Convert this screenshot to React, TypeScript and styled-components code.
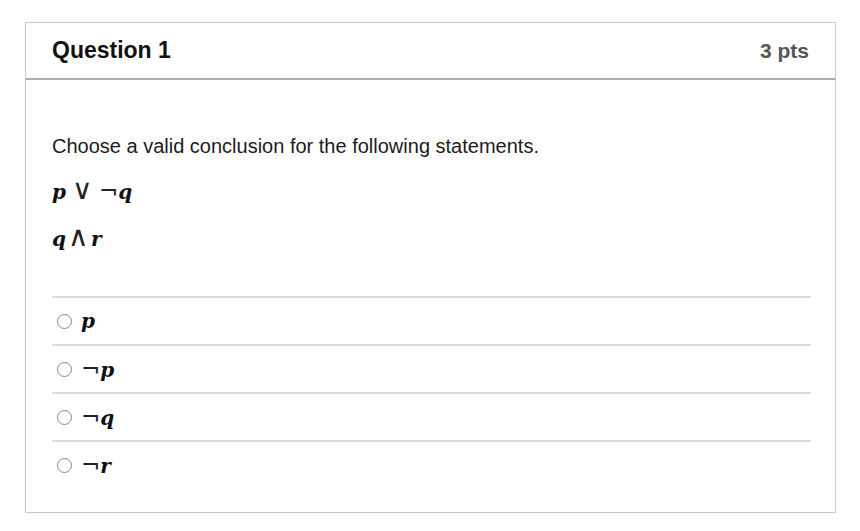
import React from "react";
import styled, { createGlobalStyle } from "styled-components";

const GlobalStyle = createGlobalStyle`
  html, body {
    margin: 0;
    padding: 0;
    background: #ffffff;
  }
  body {
    font-family: "Liberation Sans", Arial, sans-serif;
    color: #222;
  }
`;

const Page = styled.div`
  padding: 22px 0 0 25px;
  width: 860px;
  height: 531px;
  box-sizing: border-box;
`;

const Card = styled.div`
  width: 811px;
  height: 491px;
  box-sizing: border-box;
  border: 1px solid #c8c8c8;
  display: flex;
  flex-direction: column;
`;

const Header = styled.div`
  height: 57px;
  box-sizing: border-box;
  border-bottom: 2px solid #adadad;
  display: flex;
  align-items: center;
  justify-content: space-between;
  padding: 0 26px 0 26px;
`;

const Title = styled.div`
  font-weight: 700;
  font-size: 23px;
  color: #111;
`;

const Points = styled.div`
  font-weight: 700;
  font-size: 21px;
  color: #555;
`;

const Body = styled.div`
  padding: 51px 24px 0 26px;
  display: flex;
  flex-direction: column;
`;

const Prompt = styled.div`
  font-size: 20px;
  line-height: 30px;
  color: #1c1c1c;
`;

const MathLine = styled.div<{ $top: number }>`
  height: 30px;
  margin-top: ${(p) => p.$top}px;
  display: flex;
  align-items: center;
`;

const Expr = styled.span`
  display: inline-flex;
  align-items: baseline;
`;

const Var = styled.span`
  font-family: "DejaVu Serif", "Liberation Serif", serif;
  font-style: italic;
  font-weight: 700;
  font-size: 20px;
  line-height: 24px;
  color: #111;
`;

const Op = styled.span<{ $gap?: number; $size?: number; $weight?: number }>`
  font-family: "DejaVu Sans", sans-serif;
  font-weight: ${(p) => p.$weight ?? 200};
  font-size: ${(p) => p.$size ?? 28}px;
  line-height: 24px;
  color: #222;
  margin: 0 ${(p) => p.$gap ?? 0}px;
`;

const Answers = styled.div`
  margin-top: 43px;
  display: flex;
  flex-direction: column;
`;

const Answer = styled.label`
  height: 48px;
  box-sizing: border-box;
  border-top: 2px solid #dcdcdc;
  display: flex;
  align-items: center;
  padding-left: 5px;
  gap: 9px;
`;

const Radio = styled.span`
  width: 15px;
  height: 15px;
  box-sizing: border-box;
  border: 1px solid #888;
  border-radius: 50%;
  background: #fff;
`;

const Neg = () => (
  <Op $size={23} $weight={400}>
    ¬
  </Op>
);

const options: { neg: boolean; v: string }[] = [
  { neg: false, v: "p" },
  { neg: true, v: "p" },
  { neg: true, v: "q" },
  { neg: true, v: "r" },
];

export default function App() {
  return (
    <>
      <GlobalStyle />
      <Page>
        <Card>
          <Header>
            <Title>Question 1</Title>
            <Points>3 pts</Points>
          </Header>
          <Body>
            <Prompt>Choose a valid conclusion for the following statements.</Prompt>
            <MathLine $top={15}>
              <Expr>
                <Var>p</Var>
                <Op $gap={6}>∨</Op>
                <Neg />
                <Var>q</Var>
              </Expr>
            </MathLine>
            <MathLine $top={17}>
              <Expr>
                <Var>q</Var>
                <Op $gap={2}>∧</Op>
                <Var>r</Var>
              </Expr>
            </MathLine>
            <Answers>
              {options.map((o, i) => (
                <Answer key={i}>
                  <Radio />
                  <Expr>
                    {o.neg && <Neg />}
                    <Var>{o.v}</Var>
                  </Expr>
                </Answer>
              ))}
            </Answers>
          </Body>
        </Card>
      </Page>
    </>
  );
}
